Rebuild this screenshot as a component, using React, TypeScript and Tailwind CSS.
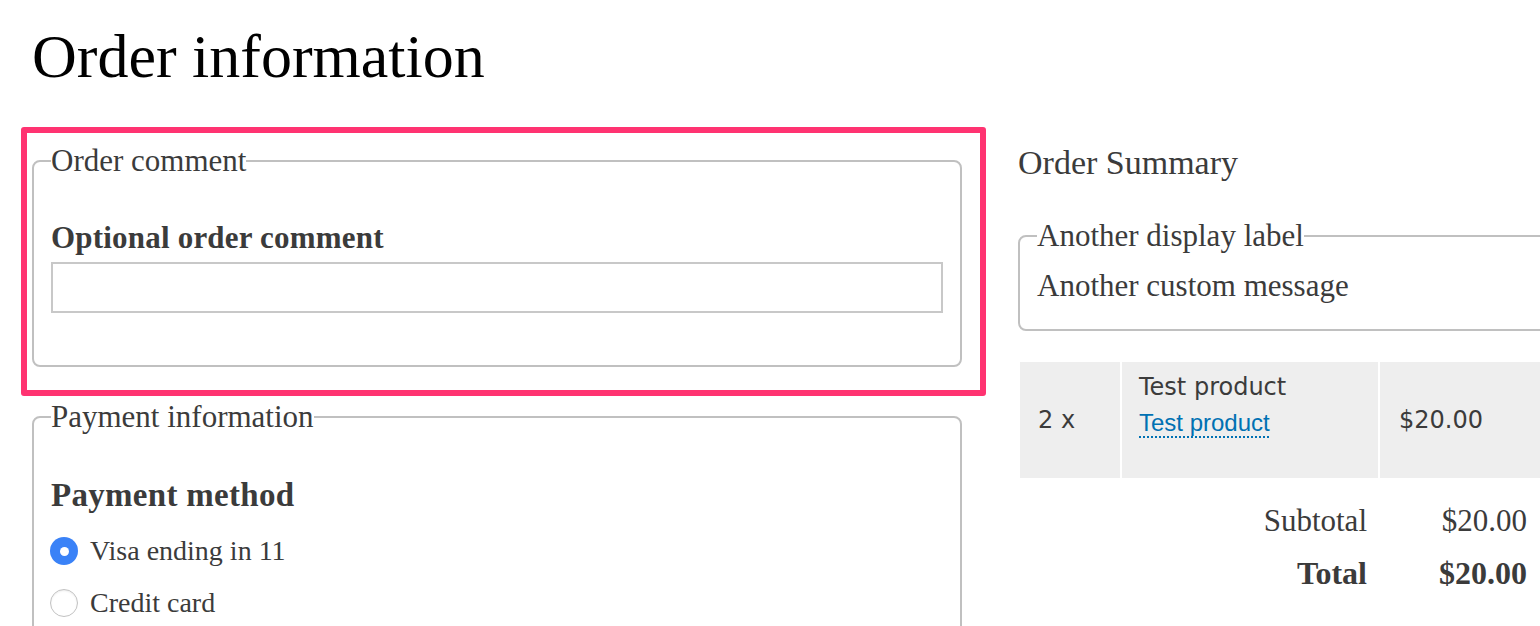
const serif = "font-['Liberation_Serif',serif]";

const Radio = ({ checked, label }: { checked?: boolean; label: string }) => {
  return (
    <div className="flex items-center h-[52px]">
      {checked ? (
        <span className="flex items-center justify-center w-[28px] h-[28px] -ml-[1px] rounded-full bg-[#3a82f7]">
          <span className="w-[9px] h-[9px] rounded-full bg-white" />
        </span>
      ) : (
        <span className="w-[28px] h-[28px] -ml-[1px] rounded-full border border-[#c2c2c2] bg-white shadow-[inset_0_1px_2px_rgba(0,0,0,0.08)]" />
      )}
      <span className="ml-[12px] text-[28px] leading-[52px] text-[#3b3b3b]">{label}</span>
    </div>
  );
};

const App = () => {
  return (
    <div className={`w-[1540px] h-[626px] overflow-hidden bg-white pt-[20px] ${serif}`}>
      <h1 className="ml-[32px] text-[62px] leading-[72px] text-black">Order information</h1>

      <div className="flex mt-[35px] pl-[21px]">
        {/* left column */}
        <div className="w-[965px] shrink-0">
          <div className="border-[6px] border-[#ff3371] rounded-[3px] pt-[9px] pl-[5px] pr-[18px] pb-[23px]">
            <fieldset className="border-2 border-[#c0c0c0] rounded-[8px] px-[17px] pb-[52px]">
              <legend className="text-[31px] leading-[37px] text-[#3b3b3b]">Order comment</legend>
              <div className="mt-[40px] text-[31px] leading-[37px] font-bold tracking-[0.2px] text-[#3b3b3b]">
                Optional order comment
              </div>
              <input
                type="text"
                className="block mt-[6px] w-full h-[51px] border-2 border-[#c8c8c8] bg-white outline-none"
              />
            </fieldset>
          </div>

          <fieldset className="mt-[2px] ml-[11px] w-[930px] border-2 border-[#c0c0c0] rounded-[8px] px-[17px] pb-[40px]">
            <legend className="text-[31px] leading-[37px] text-[#3b3b3b]">Payment information</legend>
            <div className="mt-[41px] text-[33px] leading-[38px] font-bold tracking-[0.3px] text-[#3b3b3b]">
              Payment method
            </div>
            <div className="mt-[11px]">
              <Radio checked label="Visa ending in 11" />
              <Radio label="Credit card" />
            </div>
          </fieldset>
        </div>

        {/* right column */}
        <div className="ml-[32px] w-[560px] shrink-0 pt-[16px]">
          <h2 className="text-[34px] leading-[40px] text-[#3b3b3b]">Order Summary</h2>

          <fieldset className="mt-[34px] border-2 border-[#c0c0c0] rounded-[8px] px-[17px] pb-[25px]">
            <legend className="text-[31px] leading-[37px] text-[#3b3b3b]">Another display label</legend>
            <div className="mt-[13px] text-[31px] leading-[37px] text-[#3b3b3b]">Another custom message</div>
          </fieldset>

          <div className="flex gap-[2px] mt-[31px] ml-[2px] h-[116px] font-['DejaVu_Sans',sans-serif] text-[24px] text-[#3b3b3b]">
            <div className="w-[100px] bg-[#eeeeee] flex items-center pl-[18px]">2 x</div>
            <div className="w-[256px] bg-[#eeeeee] pl-[17px] pt-[8px]">
              <div className="leading-[35px]">Test product</div>
              <div className="leading-[35px]">
                <a
                  href="#"
                  className="font-['Liberation_Sans',sans-serif] text-[#0071b3] underline decoration-dotted decoration-2 underline-offset-[5px]"
                >
                  Test product
                </a>
              </div>
            </div>
            <div className="flex-1 bg-[#eeeeee] flex items-center pl-[19px]">$20.00</div>
          </div>

          <div className="mt-[16px] text-[31px] leading-[53px] text-[#3b3b3b]">
            <div className="flex">
              <div className="w-[349px] text-right">Subtotal</div>
              <div className="w-[160px] text-right">$20.00</div>
            </div>
            <div className="flex font-bold text-[32px]">
              <div className="w-[349px] text-right">Total</div>
              <div className="w-[160px] text-right">$20.00</div>
            </div>
          </div>
        </div>
      </div>
    </div>
  );
};

export default App;
